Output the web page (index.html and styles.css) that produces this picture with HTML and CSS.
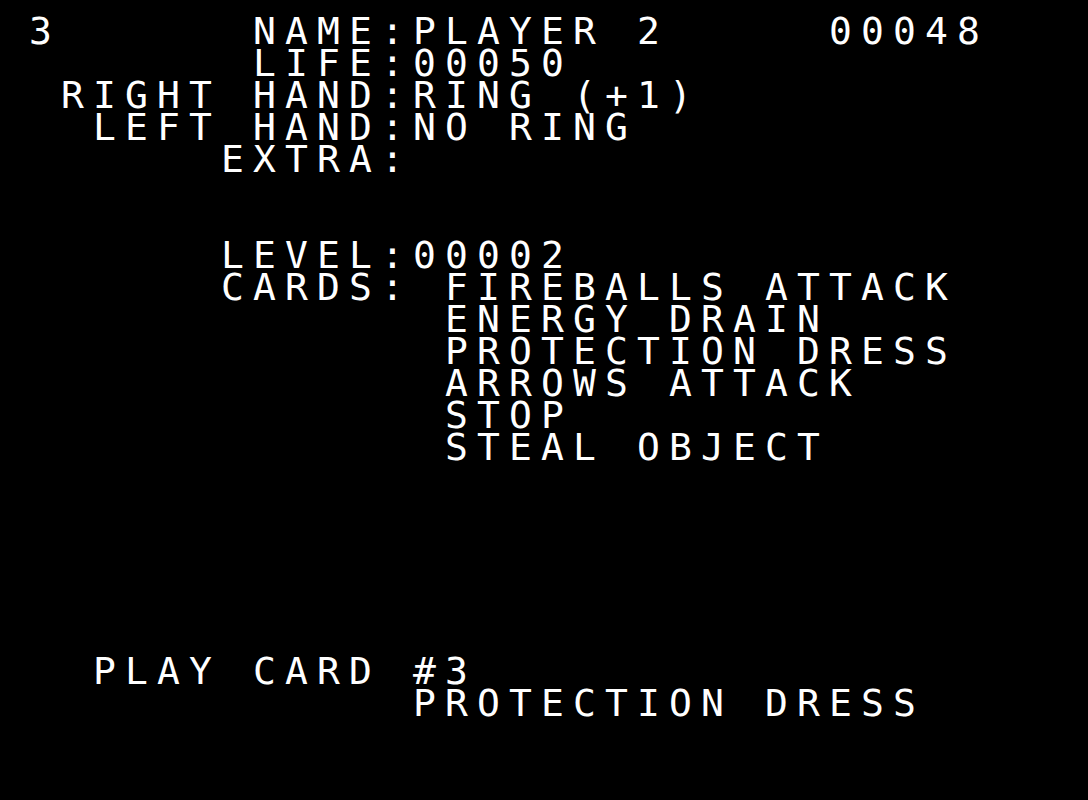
FILE: index.html
```html
<!DOCTYPE html>
<html>
<head>
<meta charset="utf-8">
<title>Player screen</title>
<link rel="stylesheet" href="styles.css">
</head>
<body>
<div class="screen">
<div class="line"> 3      NAME:PLAYER 2     00048</div>
<div class="line">        LIFE:00050</div>
<div class="line">  RIGHT HAND:RING (+1)</div>
<div class="line">   LEFT HAND:NO RING</div>
<div class="line">       EXTRA:</div>
<div class="line"> </div>
<div class="line"> </div>
<div class="line">       LEVEL:00002</div>
<div class="line">       CARDS: FIREBALLS ATTACK</div>
<div class="line">              ENERGY DRAIN</div>
<div class="line">              PROTECTION DRESS</div>
<div class="line">              ARROWS ATTACK</div>
<div class="line">              STOP</div>
<div class="line">              STEAL OBJECT</div>
<div class="line"> </div>
<div class="line"> </div>
<div class="line"> </div>
<div class="line"> </div>
<div class="line"> </div>
<div class="line"> </div>
<div class="line">   PLAY CARD #3</div>
<div class="line">             PROTECTION DRESS</div>
</div>
</body>
</html>
```

FILE: styles.css
```css
html, body {
  margin: 0;
  padding: 0;
  background: #000;
}
body {
  width: 1088px;
  height: 800px;
  overflow: hidden;
}
.screen {
  padding-top: 15px;
  margin-left: -3px;
  color: #fff;
  font-family: "DejaVu Sans Mono", "Liberation Mono", monospace;
  font-size: 38px;
  letter-spacing: 9.12px;
  font-variant-numeric: slashed-zero;
}
.line {
  height: 32px;
  line-height: 32px;
  white-space: pre;
}
```
